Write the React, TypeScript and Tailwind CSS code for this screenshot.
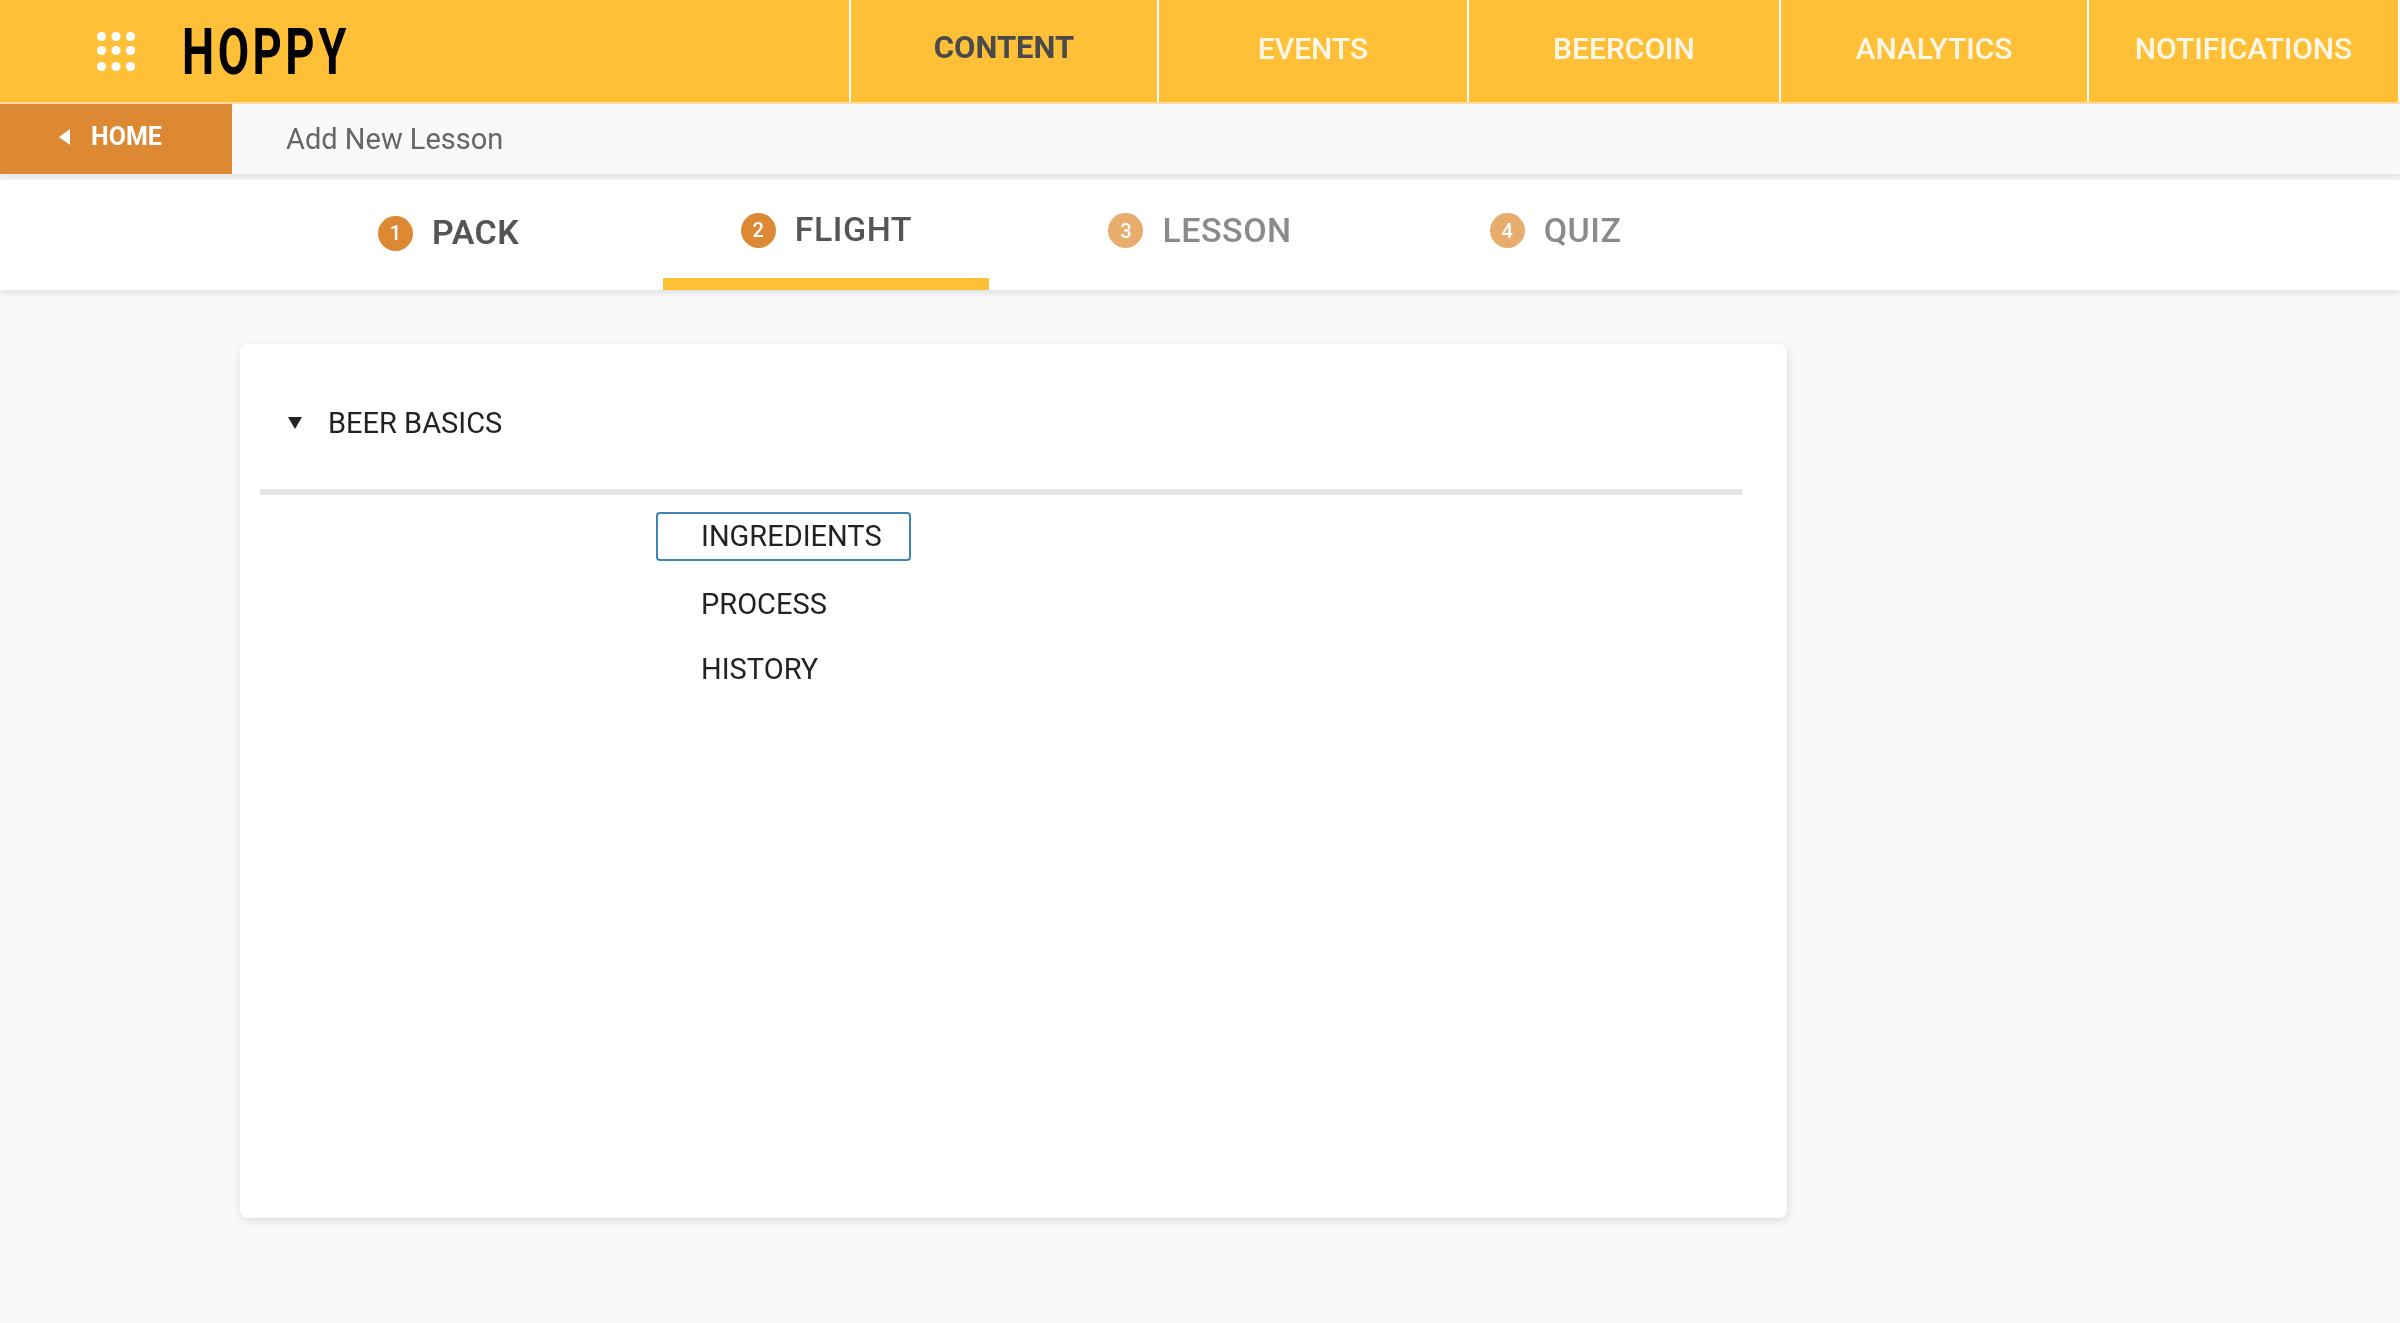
const navItems = [
  { label: "CONTENT", width: "w-[308px]" },
  { label: "EVENTS", width: "w-[310px]" },
  { label: "BEERCOIN", width: "w-[312px]" },
  { label: "ANALYTICS", width: "w-[308px]" },
  { label: "NOTIFICATIONS", width: "w-[311px]" },
];

function Step({ n, label, faded, bold }: { n: number; label: string; faded?: boolean; bold?: boolean }) {
  return (
    <div className="flex items-center gap-[19px]">
      <span
        className={`flex h-[35px] w-[35px] items-center justify-center rounded-full text-[20px] font-medium text-white blur-[0.4px] ${
          faded ? "bg-[#e8ac6c]" : "bg-[#dd8833]"
        }`}
      >
        {n}
      </span>
      <span
        className={`-translate-y-px text-[34px] leading-none tracking-[0.5px] blur-[0.6px] ${bold ? "font-semibold" : "font-medium"} ${
          faded ? "text-[#8a8a8a]" : "text-[#555555]"
        }`}
      >
        {label}
      </span>
    </div>
  );
}

export default function App() {
  return (
    <div className="flex h-[1323px] w-[2400px] flex-col overflow-hidden bg-[#f9f9f9] font-['Roboto',sans-serif]">
      <header className="flex h-[104px] shrink-0 border-b-2 border-[#ffe0a0] bg-[#ffbf36]">
        <div className="flex w-[849px] shrink-0 items-center">
          <svg width="38" height="39" viewBox="0 0 38 39" className="ml-[97px] fill-white blur-[0.5px]">
            {[4.5, 18.5, 34.5].map((cy) =>
              [4.5, 19, 33.5].map((cx) => <circle key={`${cx}-${cy}`} cx={cx} cy={cy} r="4.6" />),
            )}
          </svg>
          <span className="ml-[47px] origin-left translate-y-px scale-x-[0.7] text-[65px] font-bold leading-none tracking-[5px] text-black blur-[0.5px]">
            HOPPY
          </span>
        </div>
        {navItems.map((item, i) => (
          <div
            key={item.label}
            className={`flex ${item.width} shrink-0 items-center justify-center border-l-2 border-white pb-[6px] ${
              i === 0 ? "text-[31px] font-bold text-[#4a4a4a]" : "text-[30px] font-medium text-[#fff8e8]"
            }`}
          >
            <span className="blur-[0.6px]">{item.label}</span>
          </div>
        ))}
        <div className="w-[2px] shrink-0 bg-[#f9f9f9]" />
      </header>

      <div className="flex h-[70px] shrink-0 items-stretch bg-[#f9f9f9] shadow-[0_3px_6px_rgba(0,0,0,0.1)]">
        <div className="flex w-[232px] items-center bg-[#dd8833] pl-[58px] pb-[4px] text-white">
          <svg width="13" height="16" viewBox="0 0 13 16" className="fill-white">
            <path d="M12 0 L12 16 L1 8 Z" />
          </svg>
          <span className="ml-[20px] text-[25px] font-bold blur-[0.6px]">HOME</span>
        </div>
        <div className="flex items-center pl-[54px] pt-[2px] text-[29px] text-[#666666]">
          <span className="blur-[0.6px]">Add New Lesson</span>
        </div>
      </div>

      <nav className="mt-[6px] flex h-[110px] shrink-0 items-stretch bg-white pl-[378px] shadow-[0_3px_6px_rgba(0,0,0,0.1)]">
        <div className="flex items-center pb-[4px]">
          <Step n={1} label="PACK" bold />
        </div>
        <div className="ml-[144px] flex w-[326px] items-center justify-center border-b-[12px] border-[#ffbf36] pt-[2px]">
          <Step n={2} label="FLIGHT" />
        </div>
        <div className="ml-[119px] flex items-center pb-[9px]">
          <Step n={3} label="LESSON" faded />
        </div>
        <div className="ml-[198px] flex items-center pb-[9px]">
          <Step n={4} label="QUIZ" faded />
        </div>
      </nav>

      <main className="ml-[240px] mt-[54px] h-[874px] w-[1547px] shrink-0 rounded-[8px] bg-white shadow-[1px_3px_10px_rgba(0,0,0,0.12)]">
        <div className="flex h-[145px] items-center pt-[15px] pl-[48px]">
          <svg width="14" height="12" viewBox="0 0 14 12" className="-translate-y-px fill-[#222222]">
            <path d="M0 0 H14 L7 12 Z" />
          </svg>
          <span className="ml-[26px] text-[29px] text-[#222222] blur-[0.5px]">BEER BASICS</span>
        </div>
        <div className="ml-[20px] h-[6px] w-[1482px] bg-[#e6e6e6]" />
        <ul className="ml-[416px] mt-[17px] text-[29px] leading-none text-[#222222]">
          <li className="flex h-[49px] w-[255px] items-center rounded-[4px] border-2 border-[#3d85b8] pl-[43px]">
            <span className="blur-[0.5px]">INGREDIENTS</span>
          </li>
          <li className="mt-[29px] pl-[45px]">
            <span className="blur-[0.5px]">PROCESS</span>
          </li>
          <li className="mt-[36px] pl-[45px]">
            <span className="blur-[0.5px]">HISTORY</span>
          </li>
        </ul>
      </main>
    </div>
  );
}
